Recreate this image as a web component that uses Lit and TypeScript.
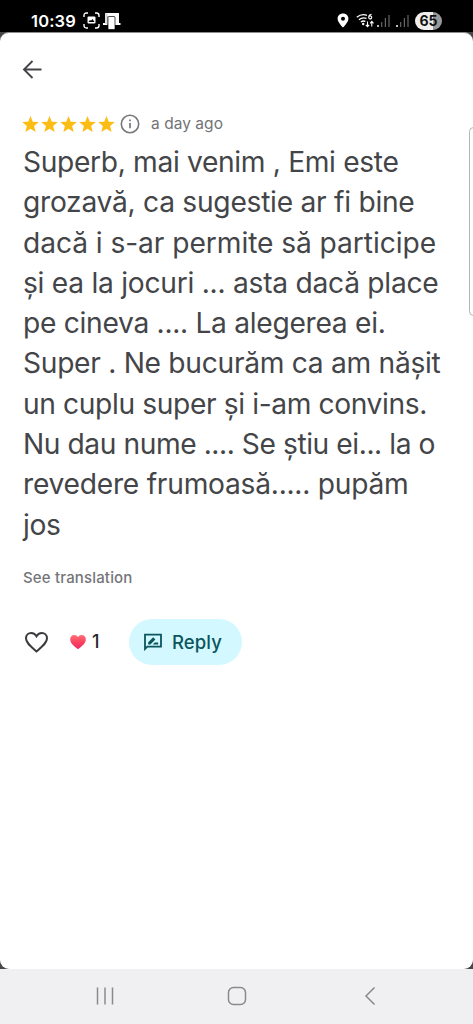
import { LitElement, html, css } from "lit";
import { customElement, property } from "lit/decorators.js";

/** One line of text whose tracking is adjusted to fill a given advance width. */
@customElement("fit-text")
class FitText extends LitElement {
  static styles = css`
    :host { display: block; white-space: pre; }
    span { display: inline-block; }
  `;
  @property() text = "";
  @property({ type: Number }) width = 0;

  updated() {
    const span = this.renderRoot.querySelector("span") as HTMLElement;
    span.style.letterSpacing = "0px";
    const natural = span.getBoundingClientRect().width;
    span.style.letterSpacing = `${(this.width - natural) / this.text.length}px`;
  }

  render() {
    return html`<span>${this.text}</span>`;
  }
}

const REVIEW: [string, number][] = [
  ["Superb, mai venim , Emi este", 375.5],
  ["grozavă, ca sugestie ar fi bine", 391.5],
  ["dacă i s-ar permite să participe", 413],
  ["și ea la jocuri ... asta dacă place", 415.5],
  ["pe cineva .... La alegerea ei.", 362.5],
  ["Super . Ne bucurăm ca am nășit", 417.5],
  ["un cuplu super și i-am convins.", 404],
  ["Nu dau nume .... Se știu ei... la o", 412],
  ["revedere frumoasă..... pupăm", 385.5],
  ["jos", 37.5],
];

@customElement("app-root")
class AppRoot extends LitElement {
  static styles = css`
    :host {
      display: flex; flex-direction: column; width: 473px; height: 1024px;
      overflow: hidden; background: #47474a; color: #434548;
      font-family: Inter, Roboto, sans-serif;
    }
    svg { display: block; flex: none; }
    .status {
      height: 32px; flex: none; box-sizing: border-box; background: #000; color: #fff;
      display: flex; align-items: center; padding: 9px 31px 0 31px;
    }
    .clock { font: 600 16.500px/22px Inter, sans-serif; width: 52px; }
    .shot { margin-right: 3px; }
    .space { flex: 1; }
    .pin { margin-right: 7px; }
    .wifi { margin-right: 3px; }
    .signal { margin-right: 6px; }
    .battery {
      width: 27px; height: 18px; border-radius: 9px; color: #111;
      background: linear-gradient(90deg, #eee 65%, #999 65%);
      font: 700 14px/18px Inter, sans-serif; text-align: center;
    }
    .sheet {
      position: relative; height: 937px; flex: none; box-sizing: border-box;
      border-top: 1px solid #8b8b8b; background: #fff; border-radius: 9px;
      padding: 24px 23px 0; display: flex; flex-direction: column;
    }
    .back { margin-left: -1px; height: 25px; }
    .meta { display: flex; align-items: center; height: 22px; margin-top: 31px; }
    .stars { display: flex; gap: 2px; margin-left: -1px; margin-right: 5px; }
    .ago { font-size: 15.500px; line-height: 22px; color: #717377; margin-left: 11px; }
    .review { font-size: 28.200px; line-height: 40.3px; margin-top: 7px; }
    .translate { font-size: 15px; font-weight: 450; line-height: 22px; color: #737579; margin-top: 22px; }
    .actions { display: flex; align-items: center; height: 46px; margin-top: 30px; }
    .like { margin-left: 1px; margin-right: 21px; }
    .count { font-size: 18px; font-weight: 500; color: #29292c; margin-left: 6px; width: 37px; }
    .reply {
      width: 113px; height: 46px; box-sizing: border-box; border-radius: 23px;
      background: #d3f8ff; color: #0d555d; display: flex; align-items: center;
      padding-left: 15px; gap: 10px; font-size: 18.500px; font-weight: 500;
    }
    .edge {
      position: absolute; right: -5px; top: 94px; width: 7px; height: 187px;
      border: 1px solid #b5b5b8; border-radius: 5px; background: #fff;
    }
    .clip { position: absolute; inset: 0; overflow: hidden; pointer-events: none; }
    .nav {
      flex: 1; background: #f0f0f3; display: flex; align-items: center;
      padding: 0 97px 2px 95px;
    }
    .home { margin-left: 112px; margin-right: auto; }
  `;

  private signal() {
    return html`<svg class="signal" width="13" height="14" viewBox="0 0 13 14">
      <path d="M1 11v2" stroke="#fff" stroke-width="1.5" />
      <path d="M4.7 8v5M8.4 4v9M12 1v12" stroke="#666" stroke-width="1.2" />
    </svg>`;
  }

  render() {
    return html`
      <div class="status">
        <fit-text class="clock" .text=${"10:39"} .width=${45}></fit-text>
        <svg class="shot" width="17" height="17" viewBox="0 0 17 17">
          <path d="M1 5V3.5Q1 1 3.5 1H5M12 1h1.5Q16 1 16 3.5V5M16 12v1.5Q16 16 13.500 16H12M5 16H3.500Q1 16 1 13.500V12" fill="none" stroke="#fff" stroke-width="1.4" />
          <path fill-rule="evenodd" d="M5.500 4.500h6q1 0 1 1v5q0 1-1 1h-6q-1 0-1-1v-5q0-1 1-1zM5.500 10h6L9.500 7 8 8.700 7 8z" fill="#fff" />
        </svg>
        <svg width="18" height="18" viewBox="0 0 18 18">
          <path d="M2 1h14v10h1.500v2H12V5H6v6H4.500V4H2zM0 11h4.500v2H0z" fill="#fff" />
          <path d="M2 1h2.500v11H2z" fill="#ddd" />
          <rect x="5" y="4.500" width="7" height="13" rx="1" fill="#fff" stroke="#000" stroke-width=".7" />
        </svg>
        <div class="space"></div>
        <svg class="pin" width="12" height="15" viewBox="0 0 12 15">
          <path fill-rule="evenodd" d="M6 .5C2.800.5.600 2.700.600 5.700.600 9.300 6 14.500 6 14.500s5.400-5.200 5.400-8.800C11.400 2.700 9.200.5 6 .5zM6 3.700a2 2 0 1 1 0 4 2 2 0 0 1 0-4z" fill="#fff" />
        </svg>
        <svg class="wifi" width="18" height="15" viewBox="0 0 18 15">
          <path d="M.800 4.300Q5.500.400 11 2.300M2.900 6.700Q6.300 4 10.500 5.300M4.900 9Q7 7.300 9.400 8.400" fill="none" stroke="#fff" stroke-width="1.300" />
          <circle cx="7.200" cy="11" r="1.200" fill="#fff" />
          <path d="M15.600 1.300Q12.700 1.700 12.700 4.300a1.500 1.500 0 1 0 1.500-1.400q-1 0-1.400.9M11.500 8.500v5M9.800 11.800l1.700 1.900 1.700-1.900M15.800 13.500v-5M14.100 10.300l1.700-1.900 1.700 1.900" fill="none" stroke="#fff" stroke-width="1.100" />
        </svg>
        ${this.signal()}${this.signal()}
        <div class="battery">65</div>
      </div>

      <main class="sheet">
        <svg class="back" width="21" height="25" viewBox="0 0 21 25">
          <path d="M19.500 12.500H2.500M10.500 4L2 12.500 10.500 21" fill="none" stroke="#434548" stroke-width="1.900" />
        </svg>
        <div class="meta">
          <div class="stars">
            ${[1, 2, 3, 4, 5].map(() => html`<svg width="17" height="17" viewBox="0 0 16 16">
              <path d="M8 0l2.100 5.300 5.700.400-4.400 3.700 1.400 5.600L8 12l-4.800 3 1.400-5.600L.200 5.700l5.700-.400z" fill="#fbbc13" />
            </svg>`)}
          </div>
          <svg width="20" height="20" viewBox="0 0 20 20">
            <circle cx="10" cy="10" r="8.700" fill="none" stroke="#75777b" stroke-width="1.600" />
            <path d="M10 9v5.300M10 5.400v1.800" stroke="#75777b" stroke-width="1.700" />
          </svg>
          <fit-text class="ago" .text=${"a day ago"} .width=${72}></fit-text>
        </div>
        <div class="review">
          ${REVIEW.map(([t, w]) => html`<fit-text .text=${t} .width=${w}></fit-text>`)}
        </div>
        <fit-text class="translate" .text=${"See translation"} .width=${109.5}></fit-text>
        <div class="actions">
          <svg class="like" width="25" height="24" viewBox="0 0 25 24">
            <path d="M12.500 21.500L10.500 19.700C5 14.800 2 12 2 8.200 2 5.200 4.300 2.900 7.200 2.900c2.100 0 4.200 1.200 5.300 3.300 1.100-2.100 3.200-3.300 5.300-3.300 2.900 0 5.200 2.300 5.200 5.300 0 3.800-3 6.600-8.500 11.500z" fill="none" stroke="#3b3c3f" stroke-width="2" />
          </svg>
          <svg width="16" height="16" viewBox="0 0 16 16">
            <defs><linearGradient id="g" x2="0" y2="1"><stop offset="0" stop-color="#ff6f78" /><stop offset=".5" stop-color="#f9435f" /><stop offset="1" stop-color="#f42568" /></linearGradient></defs>
            <path d="M8 15.300C3.500 12 .2 9 .2 5.300.2 2.900 1.900 1 4.200 1 5.900 1 7.300 1.900 8 3.300 8.700 1.900 10.100 1 11.800 1c2.300 0 4 1.900 4 4.300 0 3.700-3.300 6.700-7.800 10z" fill="url(#g)" />
          </svg>
          <span class="count">1</span>
          <div class="reply">
            <svg width="18" height="18" viewBox="0 0 18 18">
              <path d="M1 16V1.700h16v12H3.300z" fill="none" stroke="#0d555d" stroke-width="1.800" />
              <path d="M4.200 11.500V9.300l5-5 2.200 2.200-5 5zM8.700 11.500l2-2h3.500v2z" fill="#0d555d" />
            </svg>
            <fit-text .text=${"Reply"} .width=${50}></fit-text>
          </div>
        </div>
        <div class="clip"><div class="edge"></div></div>
      </main>

      <nav class="nav">
        <svg width="20" height="20" viewBox="0 0 20 20"><path d="M2.500 1.500v17M10 1.500v17M17.500 1.500v17" stroke="#8a8a8d" stroke-width="1.500" /></svg>
        <svg class="home" width="20" height="20" viewBox="0 0 20 20"><rect x="1.500" y="1.500" width="17" height="17" rx="5" fill="none" stroke="#8a8a8d" stroke-width="1.500" /></svg>
        <svg width="12" height="20" viewBox="0 0 12 20"><path d="M10.500 1.500L2 10l8.500 8.500" fill="none" stroke="#8a8a8d" stroke-width="1.500" /></svg>
      </nav>
    `;
  }
}
